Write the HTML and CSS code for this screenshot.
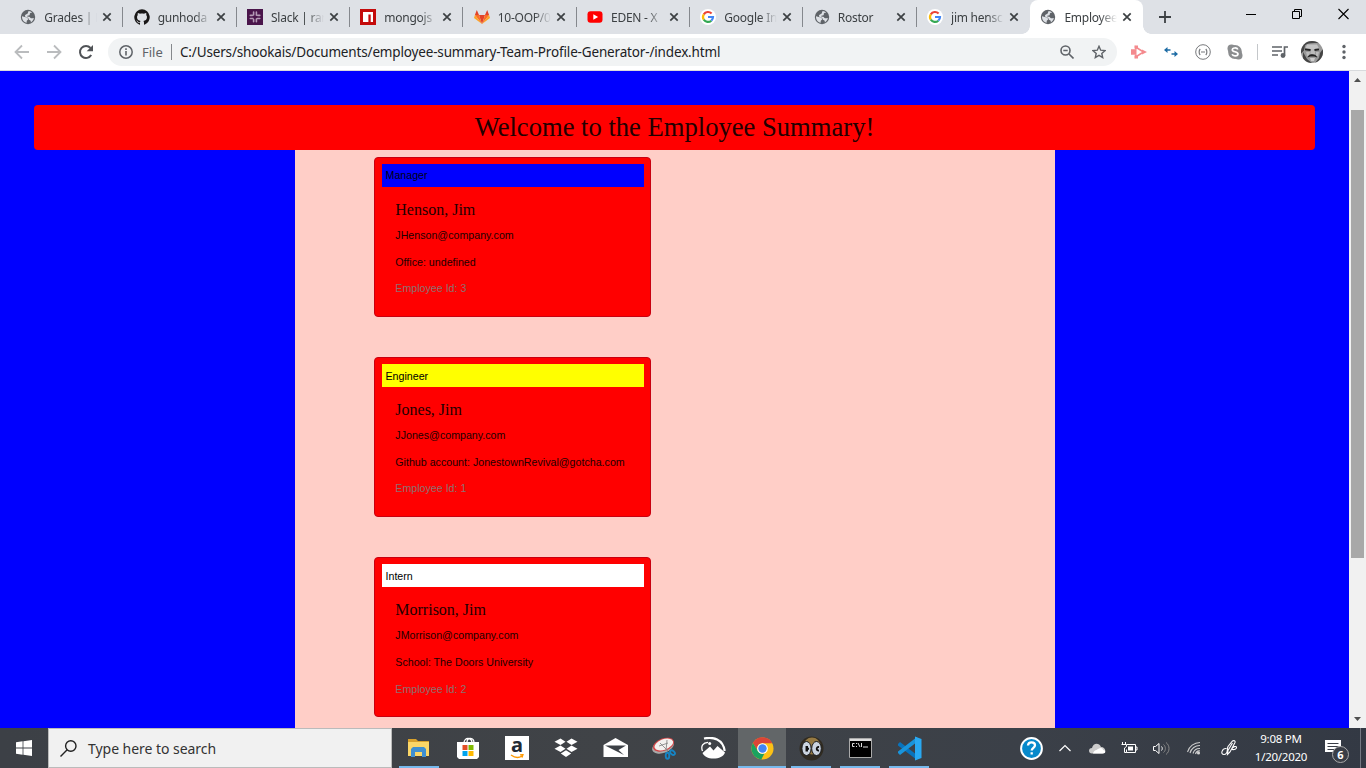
FILE: index.html
```html
<!DOCTYPE html>
<html lang="en">
<head>
<meta charset="utf-8">
<title>Employee Summary</title>
<link rel="stylesheet" href="styles.css">
</head>
<body>
<svg class="defs" width="0" height="0">
  <symbol id="globe" viewBox="0 0 16 16"><circle cx="8" cy="8" r="7.200" fill="#5f6368"/><path fill="#dee1e6" d="M2 7.200 5.800 8.200c1.600.4 2.700 1.300 2.200 2.300-.3.700-1.300.8-1.300 1.700v1.600C4 13.300 1.800 10.800 2 7.200zM8.800 2c1.200.1 2.500.7 3.300 1.500-.8.400-1.700.2-2.200.9-.5.600.3 1.300-.5 1.800-.7.500-2 .1-2.300.8-.2.700 1.200.6 2 .8 1.100.3 1 1.300 2 1.500.9.200 1.600-.4 2.700-.3-.3 2-1.400 3.500-3 4.400.3-1.200-.4-1.900-1.300-2.300-1-.4-.7-1.500-1.400-2.200-.8-.7-2.900-.6-3.200-2 0-1.500 2-1.500 2.800-2.500.5-.7.200-1.700 1.100-2.400z"/></symbol>
  <symbol id="google" viewBox="0 0 16 16"><circle cx="8" cy="8" r="8" fill="#fff"/><g fill="none" stroke-width="2.200"><path d="M3.800 5.300A5 5 0 0 1 11.600 4.500" stroke="#ea4335"/><path d="M3.800 5.300a5 5 0 0 0 0 5.400" stroke="#fbbc05"/><path d="M3.800 10.700a5 5 0 0 0 7.500 1" stroke="#34a853"/><path d="M8 8h5a5 5 0 0 1-1.700 3.700" stroke="#4285f4"/></g></symbol>
  <symbol id="close" viewBox="0 0 10 10"><path d="M1.300 1.300l7.400 7.400m0-7.400L1.300 8.700" stroke="#3c4043" stroke-width="1.700"/></symbol>
</svg>
<div class="screen">
  <header class="tabs">
    <div class="tab"><svg class="fav"><use href="#globe"/></svg><span class="title">Grades | E</span><svg class="x"><use href="#close"/></svg></div>
    <div class="tab"><svg class="fav" viewBox="0 0 16 16"><path fill="#191717" d="M8 .2a8 8 0 0 0-2.500 15.500c.4.1.5-.2.500-.4v-1.600c-2.100.5-2.600-.8-2.900-1.200-.3-.5-.8-.8-1-.9.8-.2 1.400.2 1.800.8.500.8 1.300.9 2.100.6.1-.5.300-.9.6-1.100-1.900-.2-3.600-.9-3.600-3.800 0-.9.300-1.600.8-2.100-.2-.7-.1-1.500.1-2.100.7 0 1.400.3 2.100.8 1.300-.3 2.700-.3 4 0 .7-.5 1.400-.8 2.100-.8.300.7.300 1.500.1 2.100.5.600.8 1.300.8 2.100 0 2.900-1.700 3.600-3.600 3.800.4.4.6.9.6 1.600v1.800c0 .2.100.5.500.4A8 8 0 0 0 8 .2z"/></svg><span class="title">gunhoda</span><svg class="x"><use href="#close"/></svg></div>
    <div class="tab"><svg class="fav" viewBox="0 0 16 16"><path fill="#4a154b" d="M0 0h16v16H0z"/><path d="M6.600 3v3M3.300 6.400h2M9.400 3v3.200M10.800 6.400h2M3.300 9.500h2.700M6.600 10.500v2.300M10.300 9.500h2.500M9.400 10v2.800" stroke="#b59bb6" stroke-width="1.600" stroke-linecap="round"/></svg><span class="title">Slack | ran</span><svg class="x"><use href="#close"/></svg></div>
    <div class="tab"><svg class="fav" viewBox="0 0 16 16"><path fill="#c40b0b" d="M0 0h16v16H0z"/><path fill="#fff" d="M3 3h10v10h-2.300V5.500H8.400V13H3z"/></svg><span class="title">mongojs</span><svg class="x"><use href="#close"/></svg></div>
    <div class="tab"><svg class="fav" viewBox="0 0 16 16"><path fill="#e24329" d="m8 15 3-9H5z"/><path fill="#fc6d26" d="M8 15 5 6H.900zM8 15l3-9h4.100z"/><path fill="#fca326" d="M.900 6 0 9l8 6zM15.100 6l.9 3-8 6z"/><path fill="#e24329" d="M.900 6 2.800 1 5 6zM15.100 6l-1.900-5L11 6z"/></svg><span class="title">10-OOP/0</span><svg class="x"><use href="#close"/></svg></div>
    <div class="tab"><svg class="fav" viewBox="0 0 16 16"><rect x=".5" y="2.200" width="15" height="11.600" rx="3" fill="#f00"/><path fill="#fff" d="m6.300 5.300 4.800 2.700-4.800 2.700z"/></svg><span class="title">EDEN - X</span><svg class="x"><use href="#close"/></svg></div>
    <div class="tab"><svg class="fav"><use href="#google"/></svg><span class="title">Google In</span><svg class="x"><use href="#close"/></svg></div>
    <div class="tab"><svg class="fav"><use href="#globe"/></svg><span class="title">Rostor</span><svg class="x"><use href="#close"/></svg></div>
    <div class="tab last"><svg class="fav"><use href="#google"/></svg><span class="title">jim hensc</span><svg class="x"><use href="#close"/></svg></div>
    <div class="tab active"><svg class="fav"><use href="#globe"/></svg><span class="title">Employee</span><svg class="x"><use href="#close"/></svg></div>
    <svg class="plus" viewBox="0 0 12 12"><path d="M6 0v12M0 6h12" stroke="#3c4043" stroke-width="1.800"/></svg>
    <div class="winctl">
      <svg width="10" height="12"><path d="M0 6.500h10" stroke="#000"/></svg>
      <svg width="10" height="12" fill="none" stroke="#000"><path d="M.500 3.500h7v7h-7zM2.500 3.500v-2h7v7h-2"/></svg>
      <svg width="11" height="12"><path d="m.500 1 10 10m0-10-10 10" stroke="#000" stroke-width="1.100"/></svg>
    </div>
  </header>
  <nav class="toolbar">
    <div class="tool"><svg width="16" height="16" fill="none" stroke="#babcbe" stroke-width="1.800"><path d="M15 8H2M8 1.500 1.500 8 8 14.500"/></svg></div>
    <div class="tool"><svg width="16" height="16" fill="none" stroke="#babcbe" stroke-width="1.800"><path d="M1 8h13M8 1.500 14.500 8 8 14.500"/></svg></div>
    <div class="tool"><svg width="16" height="16"><path d="M13.200 11A6 6 0 1 1 12.500 4" fill="none" stroke="#505357" stroke-width="2"/><path d="M15 1v6.300H8.700z" fill="#505357"/></svg></div>
    <div class="omnibox">
      <svg width="14" height="14"><circle cx="7" cy="7" r="6.200" fill="none" stroke="#5f6368" stroke-width="1.500"/><path d="M7 6v4.500M7 3.300v1.600" stroke="#5f6368" stroke-width="1.600"/></svg>
      <span class="scheme">File</span><i class="bar"></i><span class="url">C:/Users/shookais/Documents/employee-summary-Team-Profile-Generator-/index.html</span>
      <div class="tool"><svg width="14" height="14" fill="none" stroke="#5f6368" stroke-width="1.600"><circle cx="5.500" cy="5.500" r="4.500"/><path d="m9 9 4.500 4.500M3.300 5.500h4.400"/></svg></div>
      <div class="tool"><svg width="14" height="14" viewBox="0 0 14 14" fill="none" stroke="#5f6368" stroke-width="1.400"><path d="m7 1.300 1.700 3.900 4.300.4-3.200 2.800.9 4.200L7 10.400l-3.700 2.200.9-4.200L1 5.600l4.300-.4z"/></svg></div>
    </div>
    <div class="ext">
      <div class="tool"><svg width="16" height="14"><path d="M4.700 4.500V2L12.500 7l-7.800 5V9.500" fill="none" stroke="#f48a8e" stroke-width="1.600"/><path fill="#f48a8e" d="M0 4.200h5.500v5.600H0zM3.500.500h3.500v3H3.500zM3.500 10.500h3.500v3H3.500zM11 4.500 16 7l-5 2.500z"/></svg></div>
      <div class="tool"><svg width="14" height="10" fill="#1c6ba4"><path d="m0 3 3.500-3v2.200h3v1.600h-3V6zM14 7l-3.500 3V7.800h-3V6.200h3V4z"/></svg></div>
      <div class="tool"><svg width="16" height="16" fill="none" stroke="#77797c"><circle cx="8" cy="8" r="7.300"/><path d="M5.200 5c-1.400 1.500-1.400 4.500 0 6M10.800 5c1.400 1.500 1.400 4.500 0 6M6 8h4" stroke-width="1.200"/></svg></div>
      <div class="tool"><svg width="16" height="16"><g fill="#8b8d8f"><circle cx="8" cy="8" r="6.900"/><circle cx="4.500" cy="4.500" r="4"/><circle cx="11.500" cy="11.500" r="4"/></g><path d="M10.800 5.500C10 3.300 5.300 3.500 5.300 5.900c0 2.300 5.700 1.500 5.700 4 0 2.300-5 2.600-5.900.4" fill="none" stroke="#fff" stroke-width="1.700"/></svg></div>
      <i class="rule"></i>
      <div class="tool"><svg width="16" height="14" fill="none" stroke="#5f6368" stroke-width="1.700"><path d="M0 2h10M0 6h10M0 10h6M12.500 10.500V2H16"/><circle cx="11" cy="10.500" r="1.600" fill="#5f6368"/></svg></div>
      <div class="tool"><svg width="22" height="22" viewBox="0 0 22 22"><clipPath id="face"><circle cx="11" cy="11" r="11"/></clipPath><g clip-path="url(#face)"><path fill="#999" d="M0 0h22v22H0z"/><path fill="#444" d="M0 0h22v3.500C17 1.500 7 1.500 4 4.500l-1 5-3 3z"/><path fill="#c4c4c4" d="M6 3.500h10l2 4-4 .5H7L4.500 7z"/><path fill="#bbb" d="M10 8h3.500l.7 5.500h-5zM5 11h4l-1 4H6zM15 11h3l-1 4h-2z"/><path d="M4 8.300 9.500 9M13.500 9 18 8.300" stroke="#222" stroke-width="1.800"/><path fill="#222" d="M6.500 16.500c1-2.800 3-3.300 5-3.300s4 .6 4.800 3.300l-3-1h-4z"/><path fill="#444" d="M2 11l4 7 5 4H2zM19 12l3-4v14h-8l4-5z"/><path fill="#ccc" d="M9 17h5l-1 3h-3z"/></g></svg></div>
      <div class="tool"><svg width="4" height="16" fill="#5f6368"><circle cx="2" cy="2.500" r="1.700"/><circle cx="2" cy="8" r="1.700"/><circle cx="2" cy="13.500" r="1.700"/></svg></div>
    </div>
  </nav>
  <div class="viewport">
    <main class="page">
      <h1>Welcome to the Employee Summary!</h1>
      <section class="container">
        <article class="card"><div class="role manager">Manager</div><h2>Henson, Jim</h2><p>JHenson@company.com</p><p>Office: undefined</p><p class="muted">Employee Id: 3</p></article>
        <article class="card"><div class="role engineer">Engineer</div><h2>Jones, Jim</h2><p>JJones@company.com</p><p>Github account: JonestownRevival@gotcha.com</p><p class="muted">Employee Id: 1</p></article>
        <article class="card"><div class="role intern">Intern</div><h2>Morrison, Jim</h2><p>JMorrison@company.com</p><p>School: The Doors University</p><p class="muted">Employee Id: 2</p></article>
      </section>
    </main>
    <aside class="scroll"><svg width="7" height="4"><path d="M0 4 3.500 0 7 4z" fill="#505050"/></svg><div class="thumb"></div><svg width="7" height="4"><path d="m0 0 3.500 4L7 0z" fill="#505050"/></svg></aside>
  </div>
  <footer class="taskbar">
    <div class="start"><svg width="16" height="16" fill="#fff"><path d="M0 2.300 6.600 1.300v6.200H0zM7.400 1.200 16 0v7.500H7.400zM0 8.400h6.600v6.300L0 13.700zM7.400 8.400H16V16l-8.600-1.200z"/></svg></div>
    <div class="search"><svg width="17" height="17" fill="none" stroke="#222" stroke-width="1.400"><circle cx="10.800" cy="6" r="5.200"/><path d="M7.200 9.800.500 16.500"/></svg><span>Type here to search</span></div>
    <div class="apps">
      <div class="app open"><svg width="22" height="20"><path fill="#d8a12c" d="M0 1h8l2 2h11v5H0z"/><path fill="#fbd667" d="M0 4h21v14H0z"/><path fill="#3f8fd0" d="M3 19v-8l2-2h11l2 2v8h-4v-5H7v5z"/></svg></div>
      <div class="app"><svg width="24" height="24"><path d="M8 7c0-6 8-6 8 0M11 6c0-5 7-5 7 1" fill="none" stroke="#fff" stroke-width="1.300"/><path fill="#fff" d="M1 6h22v15l-2 2H3l-2-2z"/><path fill="#e34f26" d="M6.500 9h5v5h-5z"/><path fill="#7fba00" d="M12.500 9h5v5h-5z"/><path fill="#00a4ef" d="M6.500 15h5v5h-5z"/><path fill="#ffb900" d="M12.500 15h5v5h-5z"/></svg></div>
      <div class="app"><div class="amazon"><b>a</b><svg width="14" height="5"><path d="M1 1c4 3 8 3 11 1M10 .8l3-.2-1 3" fill="none" stroke="#f90" stroke-width="1.300"/></svg></div></div>
      <div class="app"><svg width="24" height="21" fill="#fff"><path d="m6.500.5 5 3.300L6.500 7l-6-3.200zM17.500.5l6 3.300-6 3.200-5-3.200zM6.500 7.500l5 3.300-5 3.200-6-3.200zM17.500 7.500l6 3.300-6 3.200-5-3.200zM6.800 15.500l5.200-3.300 5.200 3.300-5.200 3.400z"/></svg></div>
      <div class="app"><svg width="25" height="20"><path fill="#fff" d="m.500 7 12-7L25 7v12H.500z"/><path fill="#3c4046" d="M2 7.500h21l-7.500 4.500L21 17l-8-4z"/></svg></div>
      <div class="app"><svg width="24" height="23"><ellipse cx="11" cy="9.500" rx="11.300" ry="6.500" transform="rotate(-20 11 9.500)" fill="#a9a9a9"/><ellipse cx="11.500" cy="7.700" rx="11" ry="6.300" transform="rotate(-20 11.500 7.700)" fill="#d2484a"/><ellipse cx="11.800" cy="7.500" rx="9.700" ry="5.200" transform="rotate(-20 11.800 7.500)" fill="#f3f0ee"/><path d="m8 6 8 8M15 3l-1 11M7 9l9-3" stroke="#888" stroke-width=".9"/><g fill="none" stroke="#1684c4" stroke-width="1.900"><ellipse cx="15.500" cy="18.700" rx="1.800" ry="3"/><ellipse cx="20.500" cy="15.700" rx="1.800" ry="2.700" transform="rotate(-50 20.500 15.700)"/></g></svg></div>
      <div class="app"><svg width="25" height="22"><path d="M3 1.500C12-.500 22 2 23.700 14" fill="none" stroke="#fff" stroke-width="2.200"/><path d="M1.500 14C-.500 9 2 5.500 7 5.300" fill="none" stroke="#fff" stroke-width="1.300"/><path fill="#fff" d="M1.500 16 9 9.500l3.500 4 4-4.500 7.500 6.500c-1.500 4-6 6-11.500 6S3 19.500 1.500 16z"/><circle cx="8.700" cy="6.500" r="1.500" fill="#fff"/></svg></div>
      <div class="app open current"><svg width="23" height="23" viewBox="0 0 24 24"><circle cx="12" cy="12" r="11.500" fill="#fbc116"/><path fill="#dc4437" d="M2 6.200A11.500 11.500 0 0 1 22.200 6.500H12a5.500 5.500 0 0 0-5 8z"/><path fill="#1aa260" d="M2 6.200 7.200 14.700A5.500 5.500 0 0 0 14 17.200l-3.200 6.200A11.500 11.500 0 0 1 2 6.200z"/><circle cx="12" cy="12" r="5.600" fill="#fff"/><circle cx="12" cy="12" r="4.400" fill="#4285f4"/></svg></div>
      <div class="app open"><svg width="25" height="25"><circle cx="12.500" cy="12.500" r="12" fill="#302b21"/><ellipse cx="13" cy="10" rx="8.500" ry="8.500" fill="#967a43"/><ellipse cx="7.500" cy="12.500" rx="4.600" ry="7" fill="#cbd4df" stroke="#17191c"/><ellipse cx="17.500" cy="12.500" rx="4.800" ry="7" fill="#cbd4df" stroke="#17191c"/><path d="M9 11h-1.500v3.500H9M7.500 12.700H10M20 11c-3-.5-3 4 0 3.500" fill="none" stroke="#111" stroke-width="1.900"/></svg></div>
      <div class="app open"><svg width="23" height="20"><path fill="#000" stroke="#aaa" d="M.500.500h22v19H.500z"/><path fill="#ddd" d="M1 1h21v2H1z"/><path d="M5.500 5.500H3.500v3h2M7.500 5v1m0 2v1M9 5l2 4M12.500 5v4M14 9h5" fill="none" stroke="#ddd"/></svg></div>
      <div class="app open"><svg width="25" height="25" viewBox="0 0 25 25"><path fill="#0873bc" d="m1 8 2-2 17 13v5L1 9.500z"/><path fill="#1994db" d="m1 17 2 2L20 6V1L1 15.500z"/><path fill="#29a9f2" d="M18 .5 24.500 3v19L18 24.500z"/></svg></div>
    </div>
    <div class="tray">
      <div class="w32"><svg width="23" height="23"><circle cx="11.500" cy="11.500" r="10.400" fill="#0789cb" stroke="#fff" stroke-width="2"/><path d="M8 8.500c.2-4.300 7-4 7-.2 0 2.500-3.300 2.600-3.300 5.200M11.700 15.200v2.300" fill="none" stroke="#fff" stroke-width="2.300"/></svg></div>
      <div class="w36"><svg width="12" height="8"><path d="m.500 7 5.500-5.500L11.500 7" fill="none" stroke="#fff" stroke-width="1.200"/></svg></div>
      <div class="w28"><svg width="17" height="11"><path fill="#ccc" d="M3 10.500C-1 10.500-1 5 3 5c1-5 7-6 9-1 5 0 6 6.500 1 6.500z"/><path fill="#fff" d="M4 10.500C5 7 8 7 9 6c3-2 5-1 5 1 3 0 3 3.500 0 3.500z"/></svg></div>
      <div class="w36"><svg width="17" height="12" fill="none" stroke="#fff"><path d="M6 2.500h8.500v8H5.500v-3M14.500 5h1.500v3h-1.500M1.500 0v2.500M4.500 0v2.500M.500 2.500h5v2l-2 1.500v4.500h2"/><path fill="#fff" stroke="none" d="M7 4.500h5v4H7z"/></svg></div>
      <div class="w28"><svg width="17" height="13" fill="none" stroke="#fff"><path d="M.500 4.500h2L6 1.500v10l-3.500-3h-2zM8.500 4.500c1 1 1 3 0 4"/><path d="M10.500 2.500c2.500 2 2.500 6 0 8M13 .500c4 3 4 9 0 12" stroke="#888"/></svg></div>
      <div class="w38"><svg width="14" height="14" fill="none" stroke="#ccc" stroke-width="1.100"><path d="M.500 11A13 13 0 0 1 13 1.500M3 12a10 10 0 0 1 10-7.500M6 12.500a7 7 0 0 1 7-5M8.500 13a4 4 0 0 1 4.500-3"/><circle cx="11.500" cy="12" r="1" fill="#fff"/></svg></div>
      <div class="w32"><svg width="17" height="17" fill="none" stroke="#fff" stroke-width="1.100"><path d="M5.500 8.500C1 8-1 14.500 3 14.500c4.500 0 2.500-4.500 4-8L11.500 1c1.500-1 3 0 2.500 1.500L9 12l-2.500 2.500.5-4L11.500 3M10.500 9.500c1-3 5-4 5-2 0 1.500-2 2.500-4.500 2"/></svg></div>
      <div class="clock"><span>9:08 PM</span><span>1/20/2020</span></div>
      <div class="notice"><svg width="16" height="16"><path fill="#fff" d="M0 0h16v12h-4l-3 3v-3H0z"/><path d="M2.500 3.500h11M2.500 6.500h11M2.500 9.500h8" stroke="#3a3e47"/></svg><b>6</b></div>
    </div>
  </footer>
</div>
</body>
</html>
```
FILE: styles.css
```css
* { box-sizing: border-box; }
body { margin: 0; font-family: "Noto Sans", sans-serif; }
svg { display: block; flex: none; }
.defs { position: absolute; }
.screen { width: 1366px; height: 768px; display: flex; flex-direction: column; overflow: hidden; }

.tabs { height: 34px; background: #dee1e6; display: flex; align-items: center; padding-left: 10px; flex: none; }
.tab { width: 113.350px; height: 34px; flex: none; display: flex; align-items: center; padding-left: 10.300px; font-size: 12px; letter-spacing: -.25px; color: #3c4043;
  background: linear-gradient(#85888d, #85888d) right 7px / 1px 20px no-repeat; }
.tab.last { background: none; }
.tab.active { position: relative; background: #fff; border-radius: 8px 8px 0 0; }
.tab.active::before, .tab.active::after { content: ""; position: absolute; bottom: 0; width: 8px; height: 8px; }
.tab.active::before { left: -8px; background: radial-gradient(circle at 0 0, #dee1e6 7.500px, #fff 8px); }
.tab.active::after { right: -8px; background: radial-gradient(circle at 100% 0, #dee1e6 7.500px, #fff 8px); }
.fav { width: 16px; height: 16px; }
.title { width: 54px; margin-left: 8px; overflow: hidden; white-space: nowrap; -webkit-mask-image: linear-gradient(90deg, #000 36px, transparent 53px); mask-image: linear-gradient(90deg, #000 36px, transparent 53px); }
.x { width: 10px; height: 10px; margin-left: 4px; }
.plus { width: 12px; height: 12px; margin-left: 16px; }
.winctl { margin-left: auto; display: flex; gap: 36px; padding: 0 17px 6px 0; }

.toolbar { height: 37px; flex: none; display: flex; align-items: center; padding-left: 6px; background: #fff; border-bottom: 1px solid #d8dadd; }
.tool { width: 32px; height: 28px; flex: none; display: flex; align-items: center; justify-content: center; }
.omnibox { width: 1009px; height: 28px; margin-left: 6px; padding: 0 2px 0 11px; border-radius: 14px; background: #f1f3f4; display: flex; align-items: center; font-size: 14px; white-space: nowrap; }
.scheme { width: 29px; margin-left: 9px; color: #5f6368; font-size: 13px; }
.bar { width: 1px; height: 16px; background: #85888c; margin-right: 8px; }
.url { flex: 1; color: #202124; font-size: 13.500px; letter-spacing: -.16px; }
.ext { display: flex; align-items: center; margin-left: 6px; }
.rule { width: 1px; height: 16px; margin: 0 6px; background: #c4c7ca; }

.viewport { height: 657px; flex: none; display: flex; overflow: hidden; }
.page { width: 1349px; background: #00f; padding: 34px 34px 0; font-family: "Liberation Sans", sans-serif; }
.page h1 { height: 45px; margin: 0; border-radius: 4px; background: #f00; color: #200; font: 26.600px/45px "Liberation Serif", serif; text-align: center; }
.container { width: 760px; height: 578px; margin-left: 261px; padding: 7px 0 0 79px; background: #ffcec7; display: flex; flex-direction: column; gap: 40px; }
.card { width: 277px; height: 160px; flex: none; padding: 6px; background: #f00; border: 1px solid #c80010; border-radius: 4px; color: #200; }
.role { width: 262px; height: 23px; margin-left: 1px; padding-left: 3.500px; font-size: 10.670px; line-height: 24px; color: #000; }
.manager { background: #00f; color: #001; line-height: 22px; }
.engineer { background: #ff0; }
.intern { background: #fff; }
.card h2 { margin: 14px 0 0 14.300px; font: 16px/18px "Liberation Serif", serif; }
.card p { margin: 10px 0 0 14.300px; font-size: 10.670px; line-height: 16.600px; white-space: nowrap; }
.card h2 + p { margin-top: 8px; }
.card .muted { color: #8d7070; }
.card:last-child .muted { margin-top: 11px; }
.scroll { width: 17px; background: #f1f1f1; display: flex; flex-direction: column; align-items: center; padding: 7px 0; }
.thumb { width: 13px; height: 448px; background: #a8a8a8; margin: 28px 0 auto; }

.taskbar { height: 40px; flex: none; display: flex; background: linear-gradient(90deg, #3c4046 0, #404347 45%, #3b4048 75%, #333944); }
.start { width: 48px; display: flex; align-items: center; justify-content: center; }
.search { width: 344px; display: flex; align-items: center; padding-left: 11px; gap: 11px; border: 1px solid #bbb; background: #f1f1f1; color: #333; font-size: 14px; letter-spacing: -.04px; }
.apps { display: flex; gap: 1px; margin-left: 3px; }
.app { width: 48px; height: 40px; display: flex; align-items: center; justify-content: center; }
.open { background: linear-gradient(#76b9ed, #76b9ed) center bottom / 40px 2px no-repeat; }
.current { background: linear-gradient(#76b9ed, #76b9ed) center bottom / 48px 2px no-repeat #626668; }
.amazon { width: 24px; height: 24px; background: #fff; display: flex; flex-direction: column; align-items: center; color: #222a35; font-size: 20px; line-height: 17px; }
.amazon b { height: 18px; }
.tray { display: flex; margin-left: auto; padding-right: 5px; }
.tray > div { display: flex; align-items: center; justify-content: center; }
.w28 { width: 28px; }
.w32 { width: 32px; }
.w36 { width: 36px; }
.w38 { width: 38px; }
.tray .clock { width: 72px; flex-direction: column; color: #fff; font-size: 11.500px; letter-spacing: -.25px; line-height: 18px; white-space: nowrap; }
.tray .notice { width: 44px; position: relative; justify-content: flex-start; padding-left: 8px; border-right: 1px solid #747983; }
.notice b { position: absolute; left: 15px; top: 18px; width: 17px; height: 17px; border: 1px solid #aaa; border-radius: 50%; background: #3a3e47; color: #fff; font-size: 11px; line-height: 15px; text-align: center; }
```
